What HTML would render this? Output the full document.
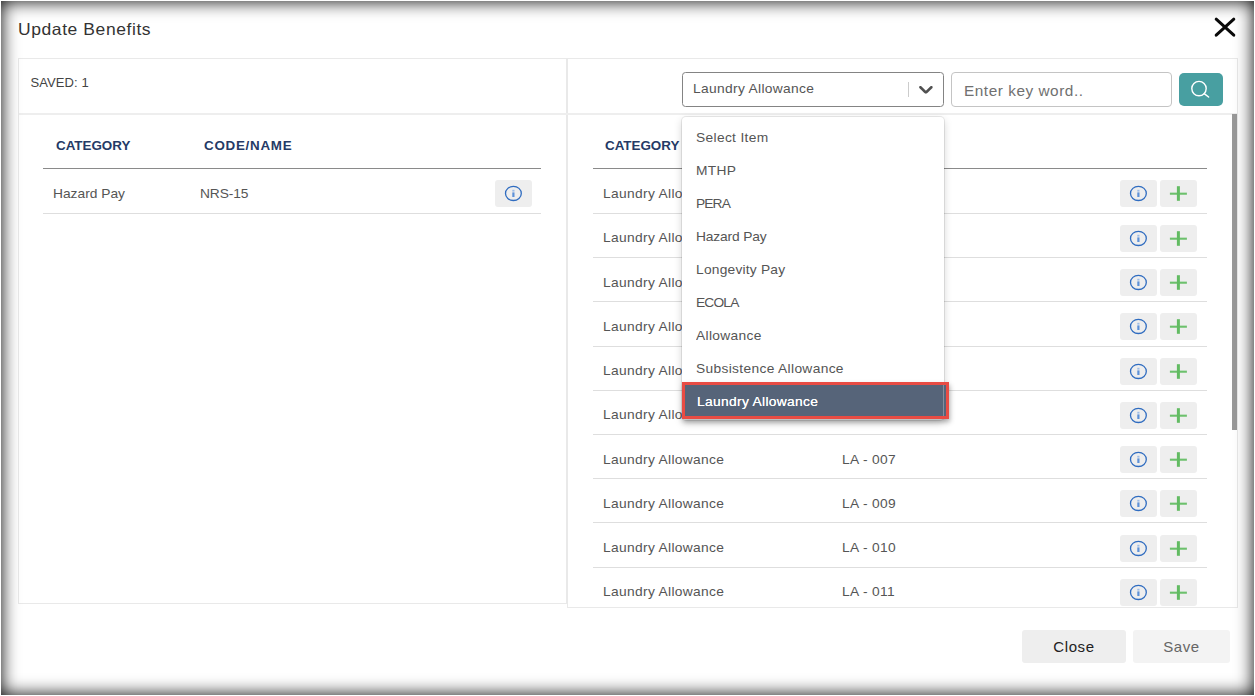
<!DOCTYPE html>
<html lang="en">
<head>
<meta charset="utf-8">
<title>Update Benefits</title>
<style>
*{box-sizing:border-box;margin:0;padding:0}
html,body{width:1255px;height:696px;overflow:hidden;background:#fff}
body{position:relative;font-family:"Liberation Sans",sans-serif;color:#333;font-size:14px}
.abs{position:absolute}
.t{position:absolute;white-space:nowrap;line-height:20px;height:20px;transform-origin:0 50%}
#frame{position:absolute;left:1px;top:1px;width:1253px;height:694px;box-shadow:inset 0 0 18px 0 #000;pointer-events:none;z-index:50}
.title{left:18px;top:19px;font-size:16.5px;color:#333;letter-spacing:0.55px;transform:scaleX(1.06)}
.panel{position:absolute;border:1px solid #e9e9e9;background:#fff}
.hline{position:absolute;height:1px;background:#e2e2e2}
.th{font-weight:bold;font-size:13px;color:#253a66;transform:scaleX(1.03)}
.td{font-size:13px;color:#555;transform:scaleX(1.06);letter-spacing:0.31px}
.ibtn{position:absolute;width:37px;height:27px;border-radius:3px;background:#eeeeee}
.ibtn svg{position:absolute;left:0;top:0}
.opt{position:absolute;left:14.3px;font-size:13px;color:#555;white-space:nowrap;line-height:20px;transform-origin:0 50%;transform:scaleX(1.06);letter-spacing:0.31px}
.btn{position:absolute;top:630px;height:33px;border-radius:3px;text-align:center;font-size:15px;line-height:33px;letter-spacing:0.6px}
</style>
</head>
<body>

<!-- modal title -->
<div class="t title">Update Benefits</div>
<svg class="abs" style="left:1212px;top:15px" width="26" height="24" viewBox="0 0 26 24">
  <path d="M4.2 4.2 L21.8 20.2 M21.8 4.2 L4.2 20.2" stroke="#0a0a0a" stroke-width="3" stroke-linecap="round" fill="none"/>
</svg>

<!-- left panel -->
<div class="panel" style="left:18px;top:58px;width:549px;height:546px"></div>
<!-- right panel -->
<div class="panel" style="left:567px;top:58px;width:671px;height:550px"></div>
<!-- header separator -->
<div class="hline" style="left:19px;top:113px;width:1218px;height:2px;background:#eeeeee"></div>

<div class="t" style="left:30.5px;top:73px;font-size:13px;color:#444;letter-spacing:0.1px">SAVED: 1</div>

<!-- left table -->
<div class="t th" style="left:56px;top:136px">CATEGORY</div>
<div class="t th" style="left:203.5px;top:136px;letter-spacing:0.7px">CODE/NAME</div>
<div class="hline" style="left:43px;top:168px;width:498px;background:#8a8a8a"></div>
<div class="t td" style="left:52.5px;top:184px;letter-spacing:0">Hazard Pay</div>
<div class="t td" style="left:200px;top:184px;letter-spacing:-0.1px">NRS-15</div>
<div class="ibtn" style="left:495px;top:180px">
  <svg width="37" height="27" viewBox="0 0 37 27"><ellipse cx="18.4" cy="13.4" rx="7.9" ry="7.1" fill="none" stroke="#2f6cc0" stroke-width="1.3"/><rect x="17.3" y="12.4" width="2.2" height="4.6" fill="#5d91d8"/><rect x="17.3" y="9.8" width="2.2" height="1.8" fill="#9dbde8"/></svg>
</div>
<div class="hline" style="left:43px;top:213px;width:498px;background:#dedede"></div>

<!-- right table -->
<div class="t th" style="left:605px;top:136px">CATEGORY</div>
<div class="hline" style="left:593px;top:168px;width:614px;background:#8a8a8a"></div>
<div class="abs" style="left:568px;top:114px;width:669px;height:493px;overflow:hidden"><div class="abs" style="left:-568px;top:-114px">
<div class="t td" style="left:603px;top:184px">Laundry Allowance</div>
<div class="t td" style="left:841.5px;top:184px">LA - 001</div>
<div class="ibtn" style="left:1120px;top:180px"><svg width="37" height="27" viewBox="0 0 37 27"><ellipse cx="18.4" cy="13.4" rx="7.9" ry="7.1" fill="none" stroke="#2f6cc0" stroke-width="1.3"/><rect x="17.3" y="12.4" width="2.2" height="4.6" fill="#5d91d8"/><rect x="17.3" y="9.8" width="2.2" height="1.8" fill="#9dbde8"/></svg></div>
<div class="ibtn" style="left:1160px;top:180px"><svg width="37" height="27" viewBox="0 0 37 27"><path d="M9.9 13.7 H26.9" stroke="#6cc06c" stroke-width="2.1" fill="none"/><path d="M18.4 6.2 V20.8" stroke="#62bb62" stroke-width="3" fill="none"/></svg></div>
<div class="hline" style="left:593px;top:213px;width:614px;background:#dedede"></div>
<div class="t td" style="left:603px;top:228px">Laundry Allowance</div>
<div class="t td" style="left:841.5px;top:228px">LA - 002</div>
<div class="ibtn" style="left:1120px;top:225px"><svg width="37" height="27" viewBox="0 0 37 27"><ellipse cx="18.4" cy="13.4" rx="7.9" ry="7.1" fill="none" stroke="#2f6cc0" stroke-width="1.3"/><rect x="17.3" y="12.4" width="2.2" height="4.6" fill="#5d91d8"/><rect x="17.3" y="9.8" width="2.2" height="1.8" fill="#9dbde8"/></svg></div>
<div class="ibtn" style="left:1160px;top:225px"><svg width="37" height="27" viewBox="0 0 37 27"><path d="M9.9 13.7 H26.9" stroke="#6cc06c" stroke-width="2.1" fill="none"/><path d="M18.4 6.2 V20.8" stroke="#62bb62" stroke-width="3" fill="none"/></svg></div>
<div class="hline" style="left:593px;top:257px;width:614px;background:#dedede"></div>
<div class="t td" style="left:603px;top:273px">Laundry Allowance</div>
<div class="t td" style="left:841.5px;top:273px">LA - 003</div>
<div class="ibtn" style="left:1120px;top:269px"><svg width="37" height="27" viewBox="0 0 37 27"><ellipse cx="18.4" cy="13.4" rx="7.9" ry="7.1" fill="none" stroke="#2f6cc0" stroke-width="1.3"/><rect x="17.3" y="12.4" width="2.2" height="4.6" fill="#5d91d8"/><rect x="17.3" y="9.8" width="2.2" height="1.8" fill="#9dbde8"/></svg></div>
<div class="ibtn" style="left:1160px;top:269px"><svg width="37" height="27" viewBox="0 0 37 27"><path d="M9.9 13.7 H26.9" stroke="#6cc06c" stroke-width="2.1" fill="none"/><path d="M18.4 6.2 V20.8" stroke="#62bb62" stroke-width="3" fill="none"/></svg></div>
<div class="hline" style="left:593px;top:301px;width:614px;background:#dedede"></div>
<div class="t td" style="left:603px;top:317px">Laundry Allowance</div>
<div class="t td" style="left:841.5px;top:317px">LA - 004</div>
<div class="ibtn" style="left:1120px;top:313px"><svg width="37" height="27" viewBox="0 0 37 27"><ellipse cx="18.4" cy="13.4" rx="7.9" ry="7.1" fill="none" stroke="#2f6cc0" stroke-width="1.3"/><rect x="17.3" y="12.4" width="2.2" height="4.6" fill="#5d91d8"/><rect x="17.3" y="9.8" width="2.2" height="1.8" fill="#9dbde8"/></svg></div>
<div class="ibtn" style="left:1160px;top:313px"><svg width="37" height="27" viewBox="0 0 37 27"><path d="M9.9 13.7 H26.9" stroke="#6cc06c" stroke-width="2.1" fill="none"/><path d="M18.4 6.2 V20.8" stroke="#62bb62" stroke-width="3" fill="none"/></svg></div>
<div class="hline" style="left:593px;top:346px;width:614px;background:#dedede"></div>
<div class="t td" style="left:603px;top:361px">Laundry Allowance</div>
<div class="t td" style="left:841.5px;top:361px">LA - 005</div>
<div class="ibtn" style="left:1120px;top:358px"><svg width="37" height="27" viewBox="0 0 37 27"><ellipse cx="18.4" cy="13.4" rx="7.9" ry="7.1" fill="none" stroke="#2f6cc0" stroke-width="1.3"/><rect x="17.3" y="12.4" width="2.2" height="4.6" fill="#5d91d8"/><rect x="17.3" y="9.8" width="2.2" height="1.8" fill="#9dbde8"/></svg></div>
<div class="ibtn" style="left:1160px;top:358px"><svg width="37" height="27" viewBox="0 0 37 27"><path d="M9.9 13.7 H26.9" stroke="#6cc06c" stroke-width="2.1" fill="none"/><path d="M18.4 6.2 V20.8" stroke="#62bb62" stroke-width="3" fill="none"/></svg></div>
<div class="hline" style="left:593px;top:390px;width:614px;background:#dedede"></div>
<div class="t td" style="left:603px;top:405px">Laundry Allowance</div>
<div class="t td" style="left:841.5px;top:405px">LA - 006</div>
<div class="ibtn" style="left:1120px;top:402px"><svg width="37" height="27" viewBox="0 0 37 27"><ellipse cx="18.4" cy="13.4" rx="7.9" ry="7.1" fill="none" stroke="#2f6cc0" stroke-width="1.3"/><rect x="17.3" y="12.4" width="2.2" height="4.6" fill="#5d91d8"/><rect x="17.3" y="9.8" width="2.2" height="1.8" fill="#9dbde8"/></svg></div>
<div class="ibtn" style="left:1160px;top:402px"><svg width="37" height="27" viewBox="0 0 37 27"><path d="M9.9 13.7 H26.9" stroke="#6cc06c" stroke-width="2.1" fill="none"/><path d="M18.4 6.2 V20.8" stroke="#62bb62" stroke-width="3" fill="none"/></svg></div>
<div class="hline" style="left:593px;top:434px;width:614px;background:#dedede"></div>
<div class="t td" style="left:603px;top:450px">Laundry Allowance</div>
<div class="t td" style="left:841.5px;top:450px">LA - 007</div>
<div class="ibtn" style="left:1120px;top:446px"><svg width="37" height="27" viewBox="0 0 37 27"><ellipse cx="18.4" cy="13.4" rx="7.9" ry="7.1" fill="none" stroke="#2f6cc0" stroke-width="1.3"/><rect x="17.3" y="12.4" width="2.2" height="4.6" fill="#5d91d8"/><rect x="17.3" y="9.8" width="2.2" height="1.8" fill="#9dbde8"/></svg></div>
<div class="ibtn" style="left:1160px;top:446px"><svg width="37" height="27" viewBox="0 0 37 27"><path d="M9.9 13.7 H26.9" stroke="#6cc06c" stroke-width="2.1" fill="none"/><path d="M18.4 6.2 V20.8" stroke="#62bb62" stroke-width="3" fill="none"/></svg></div>
<div class="hline" style="left:593px;top:478px;width:614px;background:#dedede"></div>
<div class="t td" style="left:603px;top:494px">Laundry Allowance</div>
<div class="t td" style="left:841.5px;top:494px">LA - 009</div>
<div class="ibtn" style="left:1120px;top:490px"><svg width="37" height="27" viewBox="0 0 37 27"><ellipse cx="18.4" cy="13.4" rx="7.9" ry="7.1" fill="none" stroke="#2f6cc0" stroke-width="1.3"/><rect x="17.3" y="12.4" width="2.2" height="4.6" fill="#5d91d8"/><rect x="17.3" y="9.8" width="2.2" height="1.8" fill="#9dbde8"/></svg></div>
<div class="ibtn" style="left:1160px;top:490px"><svg width="37" height="27" viewBox="0 0 37 27"><path d="M9.9 13.7 H26.9" stroke="#6cc06c" stroke-width="2.1" fill="none"/><path d="M18.4 6.2 V20.8" stroke="#62bb62" stroke-width="3" fill="none"/></svg></div>
<div class="hline" style="left:593px;top:522px;width:614px;background:#dedede"></div>
<div class="t td" style="left:603px;top:538px">Laundry Allowance</div>
<div class="t td" style="left:841.5px;top:538px">LA - 010</div>
<div class="ibtn" style="left:1120px;top:535px"><svg width="37" height="27" viewBox="0 0 37 27"><ellipse cx="18.4" cy="13.4" rx="7.9" ry="7.1" fill="none" stroke="#2f6cc0" stroke-width="1.3"/><rect x="17.3" y="12.4" width="2.2" height="4.6" fill="#5d91d8"/><rect x="17.3" y="9.8" width="2.2" height="1.8" fill="#9dbde8"/></svg></div>
<div class="ibtn" style="left:1160px;top:535px"><svg width="37" height="27" viewBox="0 0 37 27"><path d="M9.9 13.7 H26.9" stroke="#6cc06c" stroke-width="2.1" fill="none"/><path d="M18.4 6.2 V20.8" stroke="#62bb62" stroke-width="3" fill="none"/></svg></div>
<div class="hline" style="left:593px;top:567px;width:614px;background:#dedede"></div>
<div class="t td" style="left:603px;top:582px">Laundry Allowance</div>
<div class="t td" style="left:841.5px;top:582px">LA - 011</div>
<div class="ibtn" style="left:1120px;top:579px"><svg width="37" height="27" viewBox="0 0 37 27"><ellipse cx="18.4" cy="13.4" rx="7.9" ry="7.1" fill="none" stroke="#2f6cc0" stroke-width="1.3"/><rect x="17.3" y="12.4" width="2.2" height="4.6" fill="#5d91d8"/><rect x="17.3" y="9.8" width="2.2" height="1.8" fill="#9dbde8"/></svg></div>
<div class="ibtn" style="left:1160px;top:579px"><svg width="37" height="27" viewBox="0 0 37 27"><path d="M9.9 13.7 H26.9" stroke="#6cc06c" stroke-width="2.1" fill="none"/><path d="M18.4 6.2 V20.8" stroke="#62bb62" stroke-width="3" fill="none"/></svg></div>
</div></div>

<!-- scrollbar -->
<div class="abs" style="left:1232px;top:114px;width:5px;height:316px;background:#999"></div>

<!-- select -->
<div class="abs" style="left:682px;top:72px;width:262px;height:35px;border:1px solid #848484;border-radius:3.5px;background:#fff"></div>
<div class="t td" style="left:693px;top:79px">Laundry Allowance</div>
<div class="abs" style="left:908px;top:82px;width:1px;height:15px;background:#ccc"></div>
<svg class="abs" style="left:914px;top:77px" width="24" height="24" viewBox="0 0 24 24"><path transform="translate(0.2 0.75) scale(1.17 1.14)" fill="#505050" d="M4.516 7.548c0.436-0.446 1.043-0.481 1.576 0l3.908 3.747 3.908-3.747c0.533-0.481 1.141-0.446 1.574 0 0.436 0.445 0.408 1.197 0 1.615-0.406 0.418-4.695 4.502-4.695 4.502-0.217 0.223-0.502 0.335-0.787 0.335s-0.57-0.112-0.789-0.335c0 0-4.287-4.084-4.695-4.502s-0.436-1.17 0-1.615z"/></svg>

<!-- input -->
<div class="abs" style="left:951px;top:72px;width:221px;height:35px;border:1px solid #c4c4c4;border-radius:4px;background:#fff"></div>
<div class="t" style="left:964px;top:81px;font-size:14.5px;color:#707070;transform:scaleX(1.06);letter-spacing:0.5px">Enter key word..</div>

<!-- search button -->
<div class="abs" style="left:1179px;top:73px;width:44px;height:33px;border-radius:5px;background:#489fa1"></div>
<svg class="abs" style="left:1179px;top:73px" width="44" height="33" viewBox="0 0 44 33"><circle cx="20" cy="15.6" r="7.2" fill="none" stroke="#fff" stroke-width="1.4"/><path d="M25.2 20.6 L29.6 24" stroke="#fff" stroke-width="1.5" stroke-linecap="round"/></svg>

<!-- dropdown -->
<div class="abs" id="dd" style="left:682px;top:117px;width:262px;height:303px;background:#fff;border-radius:4px;box-shadow:0 0 0 1px rgba(0,0,0,.08),0 3px 8px rgba(0,0,0,.18)">
  <div class="opt" style="top:11px">Select Item</div>
  <div class="opt" style="top:44px">MTHP</div>
  <div class="opt" style="top:77px;letter-spacing:-0.85px">PERA</div>
  <div class="opt" style="top:110px;letter-spacing:-0.13px">Hazard Pay</div>
  <div class="opt" style="top:143px;letter-spacing:0.2px">Longevity Pay</div>
  <div class="opt" style="top:176px;letter-spacing:-0.8px">ECOLA</div>
  <div class="opt" style="top:209px">Allowance</div>
  <div class="opt" style="top:242px">Subsistence Allowance</div>
</div>
<div class="abs" style="left:682px;top:382px;width:267px;height:37px;border:3px solid #e84c44;background:#566479;box-shadow:1px 3px 5px rgba(0,0,0,.3)"></div>
<div class="abs" style="left:943px;top:385px;width:1px;height:31px;background:rgba(255,255,255,.28)"></div>
<div class="t td" style="left:696.5px;top:392px;color:#fff;text-shadow:0 0 0.5px #fff">Laundry Allowance</div>

<!-- footer buttons -->
<div class="btn" style="left:1022px;width:104px;background:#eeeeee;color:#222">Close</div>
<div class="btn" style="left:1133px;width:97px;background:#f3f3f3;color:#666">Save</div>

<div id="frame"></div>
</body>
</html>
